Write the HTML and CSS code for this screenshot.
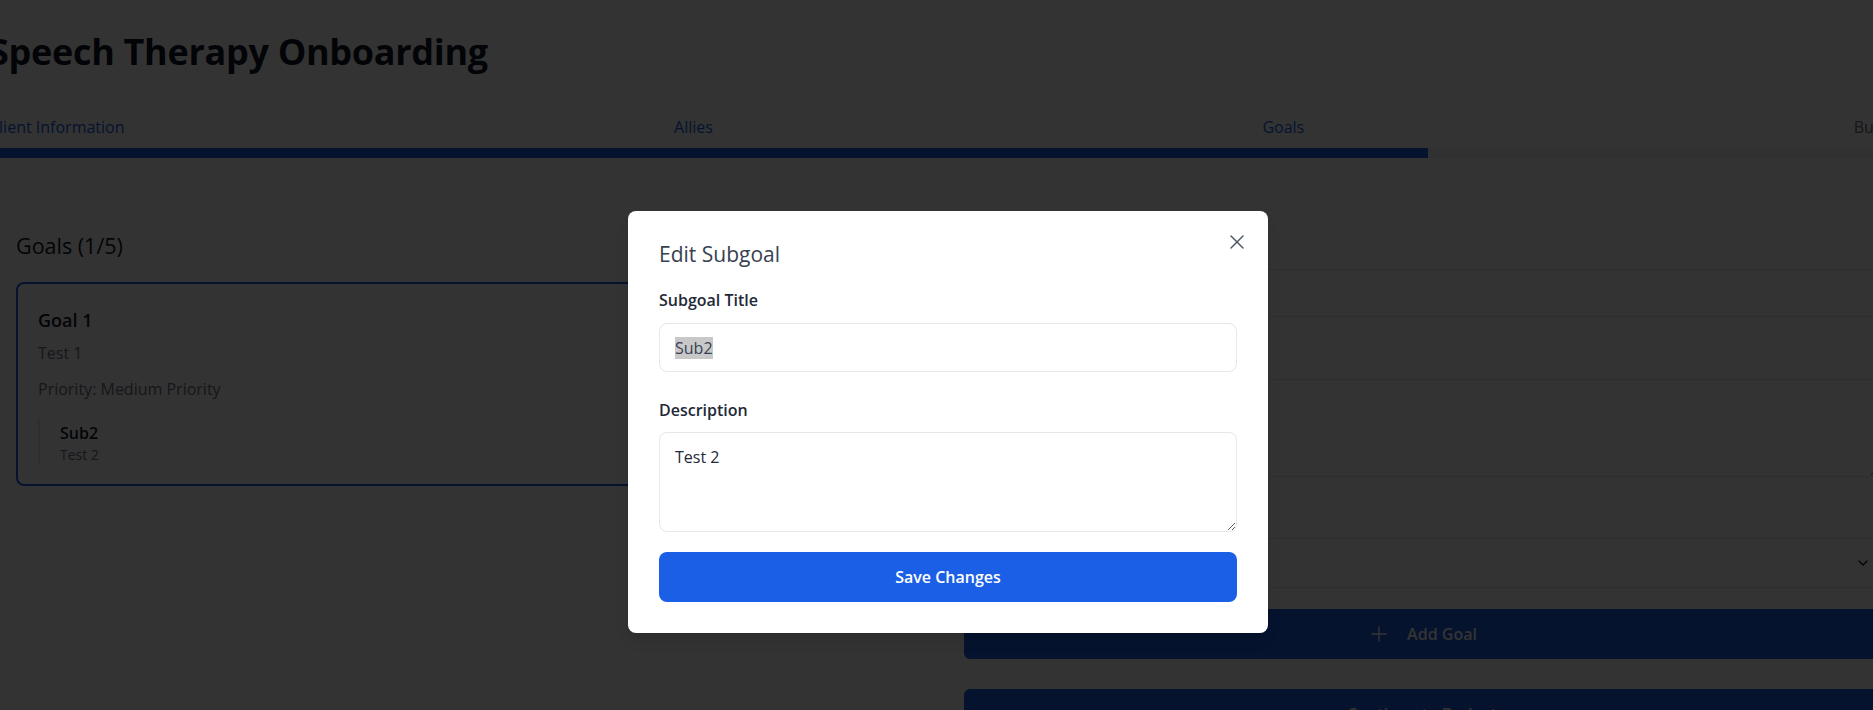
FILE: index.html
```html
<!DOCTYPE html>
<html lang="en">
<head>
<meta charset="utf-8">
<title>Speech Therapy Onboarding</title>
<link rel="stylesheet" href="styles.css">
</head>
<body>
<div class="page">
  <h1 class="title">Speech Therapy Onboarding</h1>

  <nav class="steps">
    <div class="step-labels">
      <span class="step done">Client Information</span>
      <span class="step done">Allies</span>
      <span class="step done">Goals</span>
      <span class="step">Budget</span>
    </div>
    <div class="track"><div class="fill" style="width:75%"></div></div>
  </nav>

  <main class="content">
    <section class="goals-list">
      <h2 class="section-title">Goals (1/5)</h2>
      <article class="goal-card">
        <h3 class="goal-name">Goal 1</h3>
        <p class="goal-desc">Test 1</p>
        <p class="goal-priority">Priority: Medium Priority</p>
        <div class="subgoal">
          <div class="sub-title">Sub2</div>
          <div class="sub-desc">Test 2</div>
        </div>
      </article>
    </section>

    <section class="goal-form">
      <label class="form-label first">Goal Title</label>
      <input class="form-input" type="text" placeholder="Enter goal title">
      <label class="form-label">Description</label>
      <textarea class="form-textarea" placeholder="Describe the goal"></textarea>
      <label class="form-label tight">Priority</label>
      <div class="form-select">
        <span>Medium Priority</span>
        <svg class="chev" width="16" height="16" viewBox="0 0 24 24" fill="none" stroke="currentColor" stroke-width="2" stroke-linecap="round" stroke-linejoin="round"><path d="m6 9 6 6 6-6"/></svg>
      </div>
      <button class="btn add-goal">
        <svg class="plus" width="24" height="24" viewBox="0 0 24 24" fill="none" stroke="currentColor" stroke-width="1.5" stroke-linecap="round"><path d="M5 12h14"/><path d="M12 5v14"/></svg>
        <span>Add Goal</span>
      </button>
      <button class="btn continue">Continue to Budget</button>
    </section>
  </main>

  <div class="overlay">
    <div class="modal" role="dialog">
      <button class="close" aria-label="Close">
        <svg width="24" height="24" viewBox="0 0 24 24" fill="none" stroke="currentColor" stroke-width="1.4" stroke-linecap="round"><path d="M18 6 6 18"/><path d="m6 6 12 12"/></svg>
      </button>
      <h2 class="modal-title">Edit Subgoal</h2>
      <label class="m-label first">Subgoal Title</label>
      <div class="m-input"><span class="sel">Sub2</span></div>
      <label class="m-label">Description</label>
      <textarea class="m-textarea">Test 2</textarea>
      <button class="save">Save Changes</button>
    </div>
  </div>
</div>
</body>
</html>
```

FILE: styles.css
```css
* { box-sizing: border-box; }

html, body {
  margin: 0;
  padding: 0;
  height: 100%;
  overflow: hidden;
  background: #ffffff;
}

body {
  font-family: "Open Sans", "Noto Sans", sans-serif;
  color: #111827;
}

.page {
  position: relative;
  width: 1918px;
  margin-left: -11px;
  padding-top: 32px;
  min-height: 780px;
}

.title {
  margin: 0 0 43px;
  font-size: 36px;
  line-height: 40px;
  font-weight: 700;
  color: #111827;
  letter-spacing: -0.3px;
}

.step-labels {
  display: flex;
  justify-content: space-between;
  margin-bottom: 9px;
}

.step {
  font-size: 16px;
  line-height: 24px;
  color: #6b7280;
}

.step.done { color: #1b5fe6; }

.track {
  height: 10px;
  background: #f3f4f6;
}

.fill {
  height: 100%;
  background: #1b5fe6;
}

.content {
  display: grid;
  grid-template-columns: 1fr 1fr;
  gap: 32px;
  padding: 0 27px;
  margin-top: 74px;
}

.section-title {
  margin: 0 0 22px;
  font-size: 21.5px;
  line-height: 28px;
  font-weight: 500;
  color: #111827;
}

.goal-card {
  border: 2px solid #1b5fe6;
  border-radius: 8px;
  padding: 22px 20px 19px;
}

.goal-name {
  margin: 0;
  font-size: 18px;
  line-height: 28px;
  font-weight: 600;
}

.goal-desc,
.goal-priority {
  margin: 7px 0 0;
  font-size: 16px;
  line-height: 24px;
  color: #6b7280;
}

.goal-priority { margin-top: 12px; }

.subgoal {
  margin-top: 17px;
  padding: 3px 0 0 20px;
  border-left: 2px solid #e5e7eb;
}

.sub-title {
  font-size: 16px;
  line-height: 24px;
  font-weight: 600;
}

.sub-desc {
  font-size: 14px;
  line-height: 20px;
  color: #6b7280;
}

/* right column form */
.goal-form {
  display: flex;
  flex-direction: column;
}

.form-label {
  font-size: 16px;
  line-height: 24px;
  font-weight: 600;
  margin: 30px 0 8px;
}

.form-label.first { margin-top: 5px; }
.form-label.tight { margin-bottom: 7px; }

.form-input,
.form-textarea,
.form-select {
  width: 100%;
  border: 1px solid #e5e7eb;
  border-radius: 6px;
  background: #fff;
  font-family: inherit;
  font-size: 16px;
  color: #111827;
  padding: 0 16px;
}

.form-input { height: 48px; }

.form-textarea {
  height: 98px;
  padding-top: 12px;
  resize: vertical;
}

.form-select {
  height: 50px;
  display: flex;
  align-items: center;
  justify-content: space-between;
  padding-right: 8px;
}

.chev { color: #111827; }

.btn {
  height: 50px;
  border: 0;
  border-radius: 6px;
  background: #1b5fe6;
  color: #fff;
  font-family: inherit;
  font-size: 16px;
  font-weight: 600;
  display: flex;
  align-items: center;
  justify-content: center;
}

.add-goal { margin-top: 21px; }
.add-goal .plus { margin-right: 16px; }
.continue { margin-top: 30px; }

/* modal */
.overlay {
  position: absolute;
  inset: 0;
  background: rgba(0, 0, 0, 0.8);
  display: flex;
  justify-content: center;
  align-items: flex-start;
  padding-top: 211px;
}

.modal {
  position: relative;
  width: 640px;
  background: #fff;
  border-radius: 8px;
  padding: 29px 31px 31px;
  display: flex;
  flex-direction: column;
  box-shadow: 0 10px 15px -3px rgba(0,0,0,0.1), 0 4px 6px -4px rgba(0,0,0,0.1);
}

.close {
  position: absolute;
  top: 19px;
  right: 19px;
  width: 24px;
  height: 24px;
  padding: 0;
  border: 0;
  background: none;
  color: #4b5563;
  display: flex;
}

.modal-title {
  margin: 0;
  font-size: 21px;
  line-height: 28px;
  font-weight: 500;
  color: #374151;
}

.m-label {
  font-size: 16px;
  line-height: 24px;
  font-weight: 600;
  color: #1f2937;
  margin: 26px 0 10px;
}

.m-label.first { margin: 20px 0 11px; }

.m-input {
  height: 49px;
  border: 1px solid #e5e7eb;
  border-radius: 8px;
  padding: 0 15px;
  display: flex;
  align-items: center;
  font-size: 16px;
  color: #374151;
}

.sel { background: #c8c8c8; }

.m-textarea {
  height: 100px;
  border: 1px solid #e5e7eb;
  border-radius: 8px;
  padding: 12px 15px;
  font-family: inherit;
  font-size: 16px;
  line-height: 24px;
  color: #1f2937;
  resize: vertical;
  outline: none;
}

.save {
  margin-top: 20px;
  height: 50px;
  border: 0;
  border-radius: 8px;
  background: #1b5fe6;
  color: #fff;
  font-family: inherit;
  font-size: 16px;
  font-weight: 600;
}
```
